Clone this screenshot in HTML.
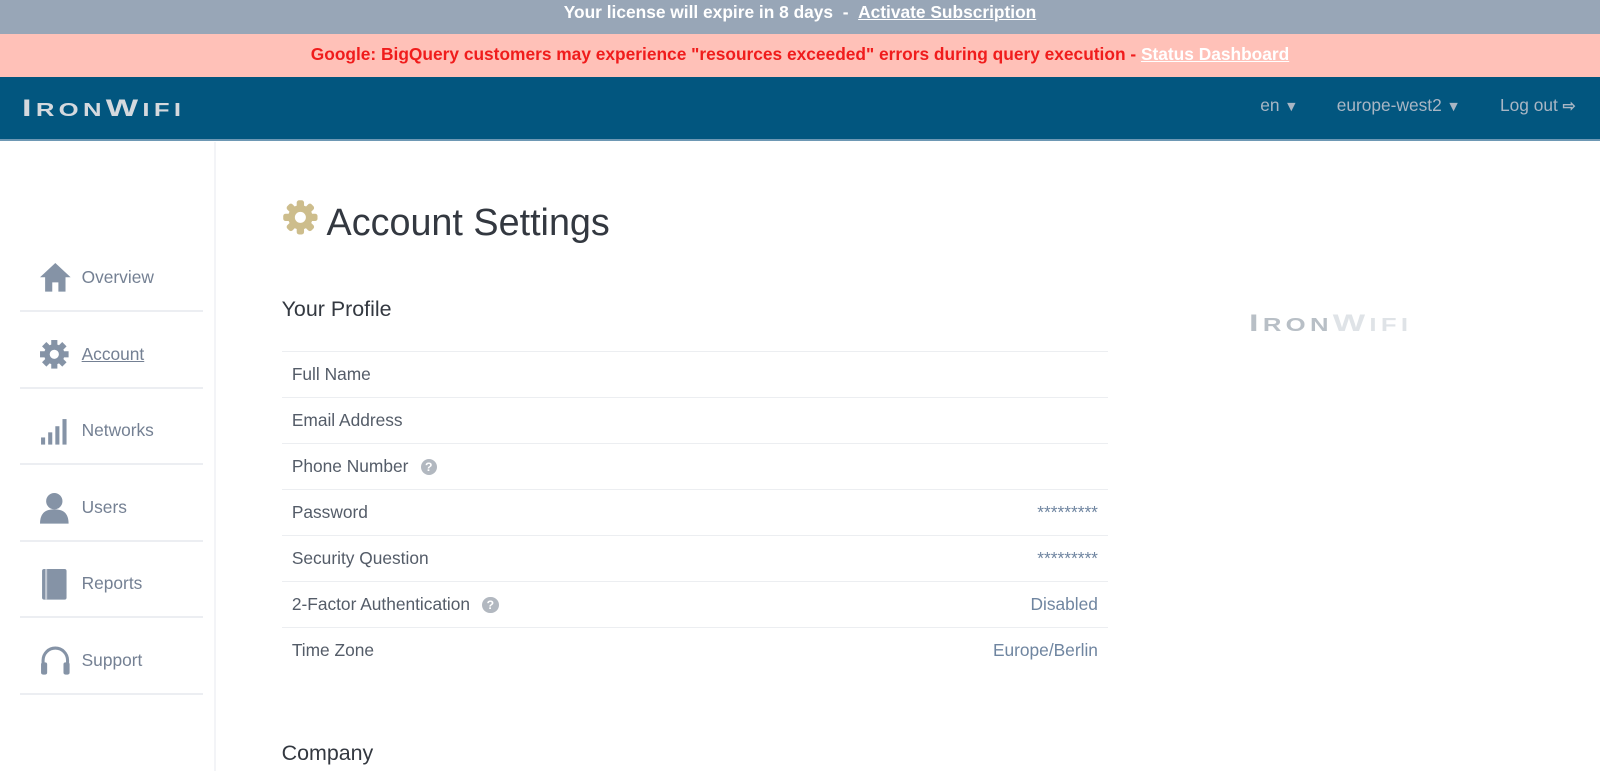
<!DOCTYPE html>
<html><head><style>
*{margin:0;padding:0;box-sizing:border-box}
html,body{width:1600px;height:771px;overflow:hidden}
body{font-family:"Liberation Sans",sans-serif;background:#fff}
#w{width:1568px;height:756px;position:relative;zoom:1.0204}
.top{height:33px;background:#98a6b7;color:#fff;font-weight:bold;font-size:17px;text-align:center;line-height:25px}
.alert{height:42px;background:#ffc1b8;color:#f01c1c;font-weight:bold;font-size:17px;text-align:center;line-height:40px}
.alert u{color:#fff}
.hdr{height:63px;background:#02567f;border-bottom:2px solid #6e98b4;position:relative}
.logo{position:absolute;font-size:18px;letter-spacing:3px;transform:scaleX(1.4);transform-origin:left top;font-weight:bold}
.logo b{font-size:24px}
.nav{position:absolute;top:18px;color:#a9b6c4;font-size:17px}
.side{position:absolute;left:0;top:139px;width:212px;height:640px;border-right:2px solid #f3f4f7}
.item{position:absolute;left:20px;width:179px;height:75px;border-bottom:2px solid #eceef2;color:#748093;font-size:17px}
.item span{position:absolute;left:60px;top:31px}
.item svg{position:absolute;left:18px;top:26px}
h1{position:absolute;left:320px;top:197px;font-size:37px;font-weight:normal;color:#333840}
h2{position:absolute;left:276px;font-size:21px;font-weight:normal;color:#333840}
.row{position:absolute;left:276px;width:810px;height:45px;border-top:1px solid #eceef1;font-size:17px;color:#545c68}
.row .l{position:absolute;left:10px;top:12px}
.row .r{position:absolute;right:10px;top:12px;color:#6f85a0}
.q{display:inline-block;width:16px;height:16px;border-radius:50%;background:#b2b8c0;color:#fff;font-size:12px;text-align:center;line-height:16px;font-weight:bold;margin-left:12px;vertical-align:1px}
</style></head><body><div id="w">
<div class="top">Your license will expire in 8 days &nbsp;- &nbsp;<u>Activate Subscription</u></div>
<div class="alert">Google: BigQuery customers may experience "resources exceeded" errors during query execution - <u>Status Dashboard</u></div>
<div class="hdr">
<div class="logo" style="left:22px;top:18px;color:#d5d9de"><b>I</b>RON<b>W</b>IFI</div>
<div class="nav" style="left:1235px">en <span style="font-size:14px">▼</span></div>
<div class="nav" style="left:1310px">europe-west2 <span style="font-size:14px">▼</span></div>
<div class="nav" style="left:1470px">Log out <span style="font-size:15px;font-weight:bold">⇨</span></div>
</div>
<div class="side">
<div class="item" style="top:92px"><svg width="32" height="30" viewBox="0 0 32 30"><path d="M16 1 L31 15 H26 V29 H19 V20 H13 V29 H6 V15 H1 Z" fill="#8593a6"/></svg><span>Overview</span></div>
<div class="item" style="top:167px"><svg width="30" height="30" viewBox="0 0 30 30"><g fill="#8593a6"><circle cx="15" cy="15" r="10"/><rect x="12" y="1" width="6" height="28"/><rect x="1" y="12" width="28" height="6"/><rect x="12" y="1" width="6" height="28" transform="rotate(45 15 15)"/><rect x="12" y="1" width="6" height="28" transform="rotate(-45 15 15)"/></g><circle cx="15" cy="15" r="4.5" fill="#fff"/></svg><span style="text-decoration:underline">Account</span></div>
<div class="item" style="top:242px"><svg width="30" height="30" viewBox="0 0 30 30" fill="#8593a6"><rect x="2" y="22" width="4" height="7"/><rect x="9" y="17" width="4" height="12"/><rect x="16" y="11" width="4" height="18"/><rect x="23" y="4" width="4" height="25"/></svg><span>Networks</span></div>
<div class="item" style="top:317px"><svg width="30" height="32" viewBox="0 0 30 32" fill="#8593a6"><circle cx="15" cy="9" r="8"/><path d="M1 31 C1 20 7 17 15 17 C23 17 29 20 29 31Z"/></svg><span>Users</span></div>
<div class="item" style="top:392px"><svg width="30" height="32" viewBox="0 0 30 32" fill="#8593a6"><rect x="3" y="1" width="24" height="30" rx="2"/><rect x="6" y="1" width="2" height="30" fill="#c3cad4"/></svg><span>Reports</span></div>
<div class="item" style="top:467px"><svg width="32" height="30" viewBox="0 0 32 30"><path d="M4 22 V15 A12 12 0 0 1 28 15 V22" stroke="#8593a6" stroke-width="3" fill="none"/><rect x="2" y="17" width="6" height="12" rx="2" fill="#8593a6"/><rect x="24" y="17" width="6" height="12" rx="2" fill="#8593a6"/></svg><span>Support</span></div>
</div>
<svg style="position:absolute;left:276px;top:195px" width="36" height="36" viewBox="0 0 30 30"><g fill="#cdbd8c"><circle cx="15" cy="15" r="10"/><rect x="12" y="1" width="6" height="28" rx="2"/><rect x="1" y="12" width="28" height="6" rx="2"/><rect x="12" y="1" width="6" height="28" rx="2" transform="rotate(45 15 15)"/><rect x="12" y="1" width="6" height="28" rx="2" transform="rotate(-45 15 15)"/></g><circle cx="15" cy="15" r="4.5" fill="#fff"/></svg>
<h1>Account Settings</h1>
<h2 style="top:291px">Your Profile</h2>
<div class="logo" style="left:1224px;top:304px;color:#b8bfc6"><b>I</b>RON<span style="color:#dfe3e7"><b>W</b>IFI</span></div>
<div class="row" style="top:344px"><span class="l">Full Name</span></div>
<div class="row" style="top:389px"><span class="l">Email Address</span></div>
<div class="row" style="top:434px"><span class="l">Phone Number<span class="q">?</span></span></div>
<div class="row" style="top:479px"><span class="l">Password</span><span class="r">*********</span></div>
<div class="row" style="top:524px"><span class="l">Security Question</span><span class="r">*********</span></div>
<div class="row" style="top:569px"><span class="l">2-Factor Authentication<span class="q">?</span></span><span class="r">Disabled</span></div>
<div class="row" style="top:614px"><span class="l">Time Zone</span><span class="r">Europe/Berlin</span></div>
<h2 style="top:726px">Company</h2>
</div></body></html>
